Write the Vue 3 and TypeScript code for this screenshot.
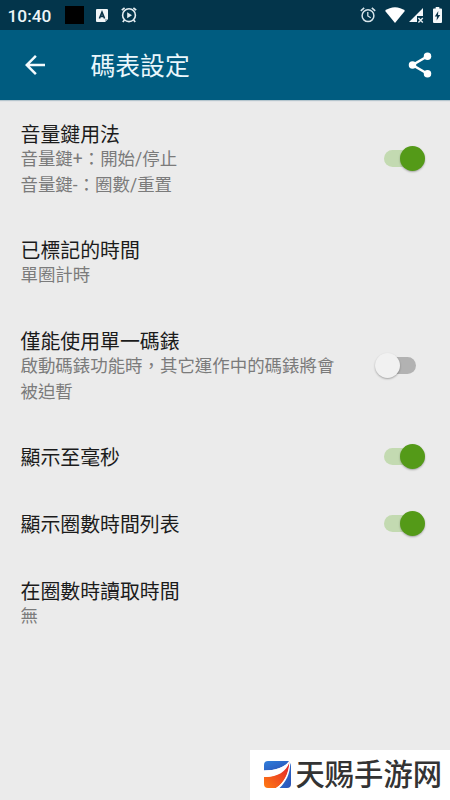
<script setup lang="ts">
import { reactive } from 'vue'

interface Setting {
  title: string
  summary?: string[]
  on?: boolean
}

const settings = reactive<Setting[]>([
  { title: '音量鍵用法', summary: ['音量鍵+：開始/停止', '音量鍵-：圈數/重置'], on: true },
  { title: '已標記的時間', summary: ['單圈計時'] },
  { title: '僅能使用單一碼錶', summary: ['啟動碼錶功能時，其它運作中的碼錶將會', '被迫暫'], on: false },
  { title: '顯示至毫秒', on: true },
  { title: '顯示圈數時間列表', on: true },
  { title: '在圈數時讀取時間', summary: ['無'] },
])

function toggle(item: Setting) {
  if (item.on !== undefined) item.on = !item.on
}
</script>

<template>
  <div class="screen">
    <header class="status">
      <span class="clock">10:40</span>
      <span class="block"></span>
      <svg class="badge" width="12" height="13" viewBox="0 0 12 13">
        <path d="M1 0H11Q12 0 12 1V10L9 13H1Q0 13 0 12V1Q0 0 1 0Z" fill="#f1f6f8" />
        <path d="M3.4 9.5L6 3.2L8.6 9.5M4.3 7.4H7.700" fill="none" stroke="#0b3348" stroke-width="1.6" />
        <path d="M12 10H9V13Z" fill="#a9bac2" />
      </svg>
      <svg class="alarm-play" width="16" height="16" viewBox="0 0 16 16" fill="none" stroke="#e4edf1">
        <circle cx="8" cy="8.2" r="6.4" stroke-width="1.6" />
        <path d="M.8 3.2L3.6 .8M12.4 .8L15.2 3.2M3.4 13L1.8 15M12.6 13L14.2 15" stroke-width="1.7" />
        <path d="M6.2 5.2V11.2L11 8.2Z" fill="#e4edf1" stroke="none" />
      </svg>
      <div class="right">
        <svg width="16" height="16" viewBox="0 0 16 16" fill="none" stroke="#d6e4ea">
          <circle cx="8" cy="8.7" r="5.9" stroke-width="1.5" />
          <path d="M.8 3.8L4.2 .9M11.8 .9L15.2 3.8" stroke-width="1.6" />
          <path d="M7.8 5V9L10.7 10.8" stroke-width="1.3" />
        </svg>
        <svg class="wifi" width="20" height="16" viewBox="0 0 20 16">
          <path d="M10 16L0 3.7C5.8-1 14.2-1 20 3.7Z" fill="#fff" />
        </svg>
        <svg class="signal" width="15" height="15" viewBox="0 0 15 15">
          <path d="M14 0V8H8V14H0Z" fill="#f4f8fa" />
          <path d="M9.4 10L13.8 14.4M13.8 10L9.4 14.4" stroke="#e6eef2" stroke-width="1.4" />
        </svg>
        <svg class="battery" width="9" height="16" viewBox="0 0 9 16">
          <path d="M2.7 0H6.3V1.6H8Q9 1.6 9 2.6V15Q9 16 8 16H1Q0 16 0 15V2.6Q0 1.6 1 1.6H2.7Z" fill="#f4f8fa" />
          <path d="M5.3 4L1.8 9.5H4L3.6 13.5L7.2 8H5Z" fill="#0b3348" />
        </svg>
      </div>
    </header>

    <nav class="toolbar">
      <svg class="back" width="30" height="30" viewBox="0 0 24 24">
        <path d="M20 11H7.83l5.59-5.59L12 4l-8 8 8 8 1.41-1.41L7.83 13H20v-2z" fill="#f3fafd" />
      </svg>
      <h1>碼表設定</h1>
      <svg class="share" width="30" height="30" viewBox="0 0 24 24">
        <path d="M18 5L6 12L18 19" fill="none" stroke="#fff" stroke-width="2" />
        <g fill="#fff">
          <circle cx="18" cy="5" r="3" />
          <circle cx="6" cy="12" r="3" />
          <circle cx="18" cy="19" r="3" />
        </g>
      </svg>
    </nav>

    <main class="list">
      <section v-for="item in settings" :key="item.title" class="row" @click="toggle(item)">
        <div class="text">
          <h2>{{ item.title }}</h2>
          <div v-if="item.summary" class="summary">
            <p v-for="line in item.summary" :key="line">{{ line }}</p>
          </div>
        </div>
        <div v-if="item.on !== undefined" class="switch" :class="{ on: item.on }">
          <span class="thumb"></span>
        </div>
      </section>
    </main>

    <footer class="mark">
      <svg width="27" height="27" viewBox="0 0 27 27">
        <defs>
          <linearGradient id="flame" x1="0" y1="1" x2="1" y2="0">
            <stop offset="0" stop-color="#ff7a12" />
            <stop offset="1" stop-color="#e0202c" />
          </linearGradient>
          <linearGradient id="sky" x1="0" y1="0" x2="1" y2="1">
            <stop offset="0" stop-color="#2f7fdc" />
            <stop offset="1" stop-color="#2b50b4" />
          </linearGradient>
        </defs>
        <path d="M4 0H25C21 6 12 9.500 0 9.500V4Q0 0 4 0Z" fill="url(#sky)" />
        <path d="M0 16C12 16 21 10 25.300 1C25 12 20 22 12 27H4Q0 27 0 23Z" fill="url(#flame)" />
        <path d="M0 9.500C12 9.500 21 6 25.800 .3C22.500 11 13 16.500 0 16Z" fill="#fff" />
        <path d="M25.300 3C25 13 20 22 12 27H15.500C22 21 26 13 26.300 2Z" fill="#fff" />
        <path d="M26.300 2Q27 3 27 5V23Q27 27 23 27H15.500C22 21 26 13 26.300 2Z" fill="url(#sky)" />
      </svg>
      <span>天赐手游网</span>
    </footer>
  </div>
</template>

<style>
body {
  margin: 0;
}
</style>

<style scoped>
.screen {
  position: relative;
  width: 450px;
  height: 800px;
  overflow: hidden;
  background: #ebebeb;
  font-family: Roboto, "Noto Sans CJK TC", sans-serif;
}

.status {
  box-sizing: border-box;
  height: 30px;
  display: flex;
  align-items: center;
  padding: 0 8px 0 7.5px;
  background: #03354b;
}

.clock {
  width: 57.5px;
  padding-top: 1px;
  color: #edf5f8;
  font-size: 17.3px;
  font-weight: 500;
  line-height: 30px;
}

.block {
  width: 19px;
  height: 18px;
  background: #000;
}

.badge {
  margin-left: 12px;
}

.alarm-play {
  margin-left: 13px;
}

.right {
  display: flex;
  align-items: center;
  margin-left: auto;
}

.wifi {
  margin-left: 9px;
}

.signal {
  margin-left: 4px;
}

.battery {
  margin-left: 9px;
}

.toolbar {
  box-sizing: border-box;
  height: 70px;
  display: flex;
  align-items: center;
  padding: 0 15px 0 20px;
  background: #005c80;
  box-shadow: 0 1px 1px #b5c5cd;
}

h1 {
  margin: 0 auto 0 40.5px;
  padding-top: 4px;
  color: #eaf7fc;
  font-size: 24.8px;
  font-weight: 400;
  line-height: 36px;
}

.list {
  padding-top: 0.5px;
}

.row {
  box-sizing: border-box;
  min-height: 67px;
  display: flex;
  align-items: center;
  justify-content: space-between;
  padding: 21.5px 25px 17.5px 20.5px;
}

.text {
  align-self: flex-start;
}

h2,
p {
  margin: 0;
  font-weight: 400;
  white-space: nowrap;
}

h2 {
  color: #1b1b1b;
  font-size: 19.9px;
  line-height: 28px;
}

.summary {
  margin-top: -3px;
  padding-bottom: 2px;
}

p {
  color: #7b7b7b;
  font-size: 17.45px;
  line-height: 25px;
}

p + p {
  padding-top: 1px;
  margin-bottom: -1px;
}

.switch {
  position: relative;
  flex: none;
  width: 50px;
  height: 25px;
  display: flex;
  align-items: center;
  margin-top: -5px;
}

.switch::before {
  content: "";
  width: 32px;
  height: 17px;
  margin: 0 auto;
  border-radius: 9px;
  background: #b2b2b2;
}

.thumb {
  position: absolute;
  top: 0;
  left: 0;
  width: 25px;
  height: 25px;
  border-radius: 50%;
  background: #f1f1f1;
  box-shadow: 0 1px 2px rgba(0, 0, 0, 0.3);
}

.switch.on::before {
  background: #c3dab1;
}

.switch.on .thumb {
  left: 25px;
  background: #549a18;
}

.mark {
  position: absolute;
  right: 0;
  bottom: 0;
  box-sizing: border-box;
  width: 200px;
  height: 50px;
  display: flex;
  align-items: center;
  gap: 5px;
  padding-left: 13.5px;
  padding-bottom: 1px;
  background: #fff;
}

.mark span {
  padding-bottom: 5px;
  color: #333;
  font-family: "Noto Sans CJK SC", sans-serif;
  font-size: 29.3px;
  font-weight: 500;
  line-height: 44px;
  white-space: nowrap;
}
</style>
